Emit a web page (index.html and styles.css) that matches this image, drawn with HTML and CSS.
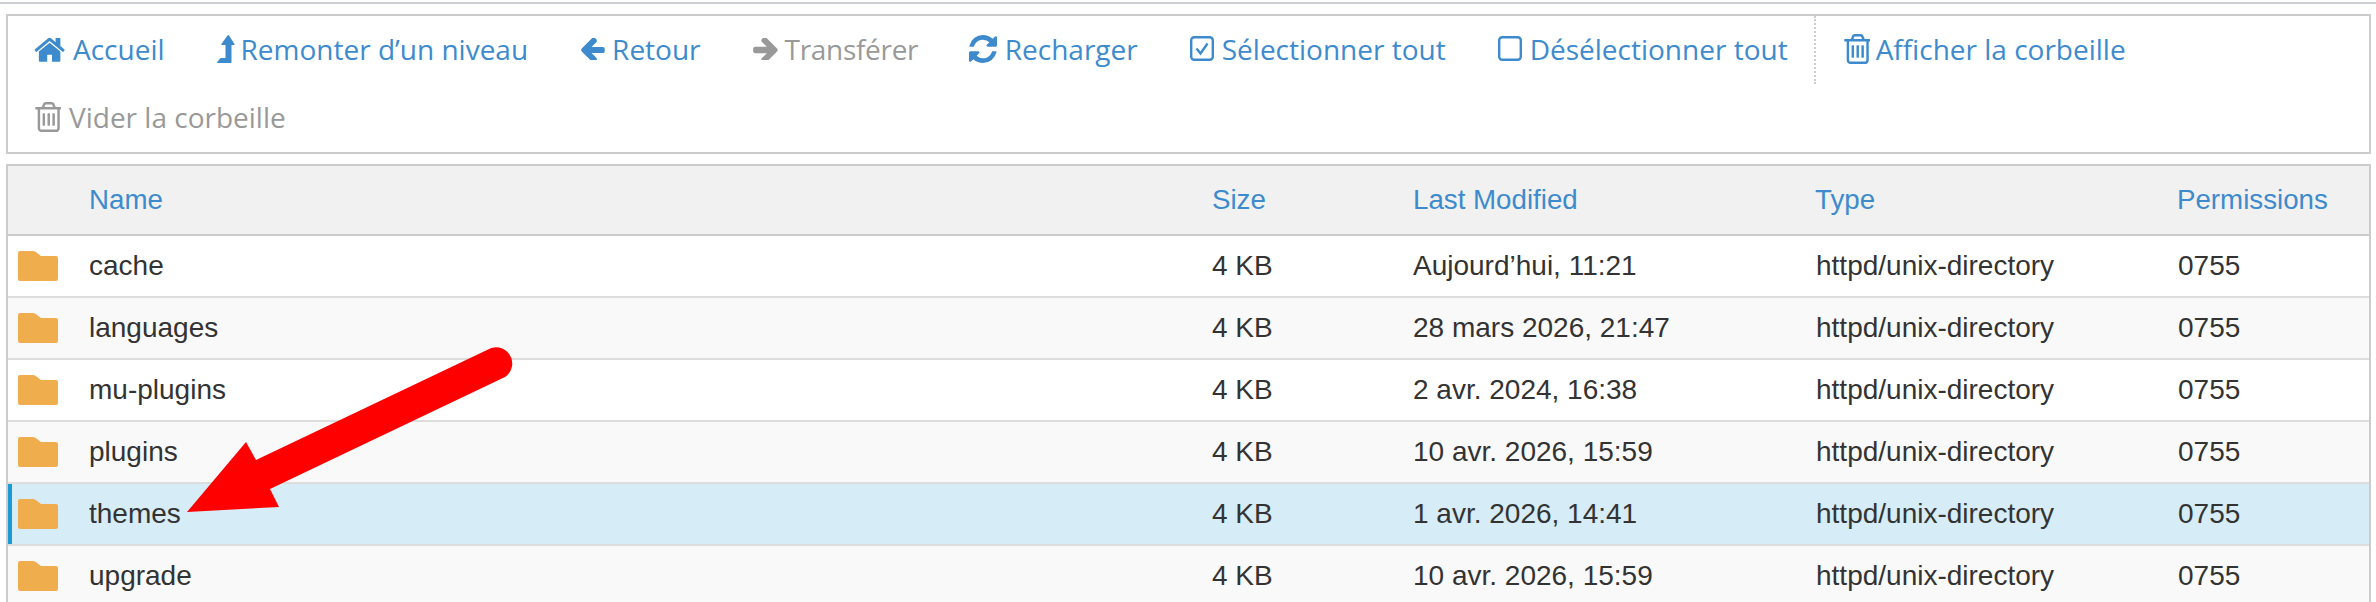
FILE: index.html
```html
<!DOCTYPE html>
<html lang="fr">
<head>
<meta charset="utf-8">
<title>File Manager</title>
<link rel="stylesheet" href="styles.css">
</head>
<body>
<div class="topline"></div>
<nav class="toolbar">
  <a class="tool"><svg class="ic ic-home" viewBox="60 160 1660 1380"><path d="M1472 992v480q0 26-19 45t-45 19h-384v-384h-256v384h-384q-26 0-45-19t-19-45v-480q0-1 .5-3t.5-3l575-474 575 474q1 2 1 6zm223-69l-62 74q-8 9-21 11h-3q-13 0-21-7l-692-577-692 577q-12 8-24 7-13-2-21-11l-62-74q-8-10-7-23.500t11-21.500l719-599q32-26 76-26t76 26l244 204v-195q0-14 9-23t23-9h192q14 0 23 9t9 23v408l219 182q10 8 11 21.500t-7 23.500z"/></svg>Accueil</a>
  <a class="tool"><svg class="ic ic-up" viewBox="0 0 18 28"><path d="M10.500 0.500a1 1 0 0 1 1.500 0l5.500 8.500a.7.7 0 0 1-.6 1H14.500V27a1 1 0 0 1-1 1H1a.7.7 0 0 1-.6-1.200l2.800-3.300a1 1 0 0 1 .8-.4H8.500V10H5a.7.7 0 0 1-.6-1z"/></svg>Remonter d’un niveau</a>
  <a class="tool"><svg class="ic ic-arrow" viewBox="120 250 1560 1300"><path d="M1664 896v128q0 53-32.500 90.500t-84.500 37.500h-704l293 294q38 36 38 90t-38 90l-75 76q-37 37-90 37-52 0-91-37l-651-652q-37-37-37-90 0-52 37-91l651-650q38-38 91-38 52 0 90 38l75 74q38 38 38 91t-38 91l-293 293h704q52 0 84.500 37.500t32.500 90.500z"/></svg>Retour</a>
  <a class="tool off narrow"><svg class="ic ic-arrow" viewBox="120 250 1500 1300"><path d="M1600 960q0 54-37 91l-651 651q-39 37-91 37-51 0-90-37l-75-75q-38-38-38-91t38-91l293-293h-704q-52 0-84.500-37.500t-32.500-90.500v-128q0-53 32.500-90.500t84.500-37.500h704l-293-294q-38-36-38-90t38-90l75-75q38-38 90-38 53 0 91 38l651 651q37 35 37 90z"/></svg>Transférer</a>
  <a class="tool"><svg class="ic ic-refresh" viewBox="128 128 1536 1536"><path d="M1639 1056q0 5-1 7-64 268-268 434.500t-478 166.500q-146 0-282.500-55t-243.500-157l-129 129q-19 19-45 19t-45-19-19-45v-448q0-26 19-45t45-19h448q26 0 45 19t19 45-19 45l-137 137q71 66 161 102t187 36q134 0 250-65t186-179q11-17 53-117 8-23 30-23h192q13 0 22.500 9.500t9.500 22.500zm25-800v448q0 26-19 45t-45 19h-448q-26 0-45-19t-19-45 19-45l138-138q-148-137-349-137-134 0-250 65t-186 179q-11 17-53 117-8 23-30 23h-199q-13 0-22.500-9.500t-9.500-22.500v-7q65-268 270-434.500t480-166.500q146 0 284 55.500t245 156.500l130-129q19-19 45-19t45 19 19 45z"/></svg>Recharger</a>
  <a class="tool"><svg class="ic ic-box" viewBox="0 0 24 25"><rect class="stroke" x="1.200" y="1.200" width="21.600" height="22.600" rx="3"/><path class="stroke" d="M6.500 12.500l4 5 7-10"/></svg>Sélectionner tout</a>
  <a class="tool"><svg class="ic ic-box" viewBox="0 0 24 25"><rect class="stroke" x="1.200" y="1.200" width="21.600" height="22.600" rx="3"/></svg>Désélectionner tout</a>
  <span class="sep"></span>
  <a class="tool"><svg class="ic ic-trash" viewBox="128 128 1408 1536" preserveAspectRatio="none"><path d="M704 736v576q0 14-9 23t-23 9h-64q-14 0-23-9t-9-23v-576q0-14 9-23t23-9h64q14 0 23 9t9 23zm256 0v576q0 14-9 23t-23 9h-64q-14 0-23-9t-9-23v-576q0-14 9-23t23-9h64q14 0 23 9t9 23zm256 0v576q0 14-9 23t-23 9h-64q-14 0-23-9t-9-23v-576q0-14 9-23t23-9h64q14 0 23 9t9 23zm128 724v-948h-896v948q0 22 7 40.500t14.500 27 10.500 8.500h832q3 0 10.500-8.500t14.500-27 7-40.500zm-672-1076h448l-48-117q-7-9-17-11h-317q-10 2-17 11zm928 32v64q0 14-9 23t-23 9h-96v948q0 83-47 143.500t-113 60.500h-832q-66 0-113-58.500t-47-141.500v-952h-96q-14 0-23-9t-9-23v-64q0-14 9-23t23-9h309l70-167q15-37 54-63t79-26h320q40 0 79 26t54 63l70 167h309q14 0 23 9t9 23z"/></svg>Afficher la corbeille</a>
  <a class="tool off"><svg class="ic ic-trash" viewBox="128 128 1408 1536" preserveAspectRatio="none"><path d="M704 736v576q0 14-9 23t-23 9h-64q-14 0-23-9t-9-23v-576q0-14 9-23t23-9h64q14 0 23 9t9 23zm256 0v576q0 14-9 23t-23 9h-64q-14 0-23-9t-9-23v-576q0-14 9-23t23-9h64q14 0 23 9t9 23zm256 0v576q0 14-9 23t-23 9h-64q-14 0-23-9t-9-23v-576q0-14 9-23t23-9h64q14 0 23 9t9 23zm128 724v-948h-896v948q0 22 7 40.500t14.500 27 10.500 8.500h832q3 0 10.500-8.500t14.500-27 7-40.500zm-672-1076h448l-48-117q-7-9-17-11h-317q-10 2-17 11zm928 32v64q0 14-9 23t-23 9h-96v948q0 83-47 143.500t-113 60.500h-832q-66 0-113-58.500t-47-141.500v-952h-96q-14 0-23-9t-9-23v-64q0-14 9-23t23-9h309l70-167q15-37 54-63t79-26h320q40 0 79 26t54 63l70 167h309q14 0 23 9t9 23z"/></svg>Vider la corbeille</a>
</nav>
<section class="table">
  <div class="row head"><span></span><span>Name</span><span>Size</span><span>Last Modified</span><span>Type</span><span>Permissions</span></div>
  <div class="row"><svg class="folder" viewBox="0 0 40 30"><path d="M2 0H15Q17 0 18.500 1.500L23 5H38Q40 5 40 7V28Q40 30 38 30H2Q0 30 0 28V2Q0 0 2 0Z"/></svg><span>cache</span><span>4 KB</span><span>Aujourd’hui, 11:21</span><span>httpd/unix-directory</span><span>0755</span></div>
  <div class="row alt"><svg class="folder" viewBox="0 0 40 30"><path d="M2 0H15Q17 0 18.500 1.500L23 5H38Q40 5 40 7V28Q40 30 38 30H2Q0 30 0 28V2Q0 0 2 0Z"/></svg><span>languages</span><span>4 KB</span><span>28 mars 2026, 21:47</span><span>httpd/unix-directory</span><span>0755</span></div>
  <div class="row"><svg class="folder" viewBox="0 0 40 30"><path d="M2 0H15Q17 0 18.500 1.500L23 5H38Q40 5 40 7V28Q40 30 38 30H2Q0 30 0 28V2Q0 0 2 0Z"/></svg><span>mu-plugins</span><span>4 KB</span><span>2 avr. 2024, 16:38</span><span>httpd/unix-directory</span><span>0755</span></div>
  <div class="row alt"><svg class="folder" viewBox="0 0 40 30"><path d="M2 0H15Q17 0 18.500 1.500L23 5H38Q40 5 40 7V28Q40 30 38 30H2Q0 30 0 28V2Q0 0 2 0Z"/></svg><span>plugins</span><span>4 KB</span><span>10 avr. 2026, 15:59</span><span>httpd/unix-directory</span><span>0755</span></div>
  <div class="row selected"><svg class="folder" viewBox="0 0 40 30"><path d="M2 0H15Q17 0 18.500 1.500L23 5H38Q40 5 40 7V28Q40 30 38 30H2Q0 30 0 28V2Q0 0 2 0Z"/></svg><span>themes</span><span>4 KB</span><span>1 avr. 2026, 14:41</span><span>httpd/unix-directory</span><span>0755</span></div>
  <div class="row alt"><svg class="folder" viewBox="0 0 40 30"><path d="M2 0H15Q17 0 18.500 1.500L23 5H38Q40 5 40 7V28Q40 30 38 30H2Q0 30 0 28V2Q0 0 2 0Z"/></svg><span>upgrade</span><span>4 KB</span><span>10 avr. 2026, 15:59</span><span>httpd/unix-directory</span><span>0755</span></div>
</section>
<svg class="callout" viewBox="0 0 2376 602"><path d="M187 512L246 442L256 460L487 350A16 16 0 0 1 505 377L270 489L279 507Z"/></svg>
</body>
</html>
```
FILE: styles.css
```css
html, body { margin: 0; padding: 0; height: 602px; overflow: hidden; background: #fff; }
body { position: relative; color: #333; font-family: "Liberation Sans", Arial, sans-serif; }

.topline { height: 2px; margin-top: 2px; background: #ccd0d4; }

.toolbar {
  display: flex; flex-wrap: wrap; align-items: flex-start; align-content: flex-start;
  row-gap: 0.500px;
  margin: 10px 5px 0 6px;
  border: 2px solid #ccc;
  height: 136px;
  font-family: "Open Sans", sans-serif; font-size: 28px;
}
.tool {
  display: flex; align-items: center;
  height: 65px; padding: 0 26px;
  color: #3d8bcd; white-space: nowrap;
}
.tool.off { color: #999; }
.tool.narrow { padding-right: 24.500px; letter-spacing: -0.300px; }
.ic { fill: currentColor; flex: none; margin-right: 8px; }
.ic-home { width: 31px; height: 26px; }
.ic-up { width: 18px; height: 28px; margin-right: 6px; }
.ic-arrow { width: 25px; height: 22px; margin-right: 7px; }
.ic-refresh { width: 28px; height: 28px; margin-right: 8px; }
.ic-box { width: 24px; height: 25px; }
.ic-trash { width: 27px; height: 30px; margin-left: -1px; margin-right: 6px; }
.tool.off .ic-trash { margin-left: 0; margin-right: 8px; }
.stroke { fill: none; stroke: currentColor; stroke-width: 2.400; }
.sep { width: 0; height: 68px; margin-left: 0; margin-right: 2px; border-left: 2px dotted #ccc; }

.table { margin: 10px 5px 0 6px; border: solid #ccc; border-width: 2px 2px 0; font-size: 28px; }
.row {
  display: grid; align-items: center;
  grid-template-columns: 81px 1123px 201px 402px 362px 1fr;
  height: 60px; border-bottom: 2px solid #ddd;
  background: #fff;
}
.row.alt { background: #f9f9f9; }
.row.selected { background: #d6ecf7; box-shadow: inset 4px 0 0 #1a9bd7; }
.row.head { height: 68px; background: #f1f1f1; border-bottom-color: #ccc; color: #3d8bcd; font-size: 27.700px; }
.row:not(.head) span:nth-last-child(-n+2) { padding-left: 1px; }
.folder { width: 40px; height: 30px; margin-left: 10px; fill: #f0ad4e; }

.callout { position: absolute; left: 0; top: 0; width: 2376px; height: 602px; fill: #fe0000; pointer-events: none; }
```
